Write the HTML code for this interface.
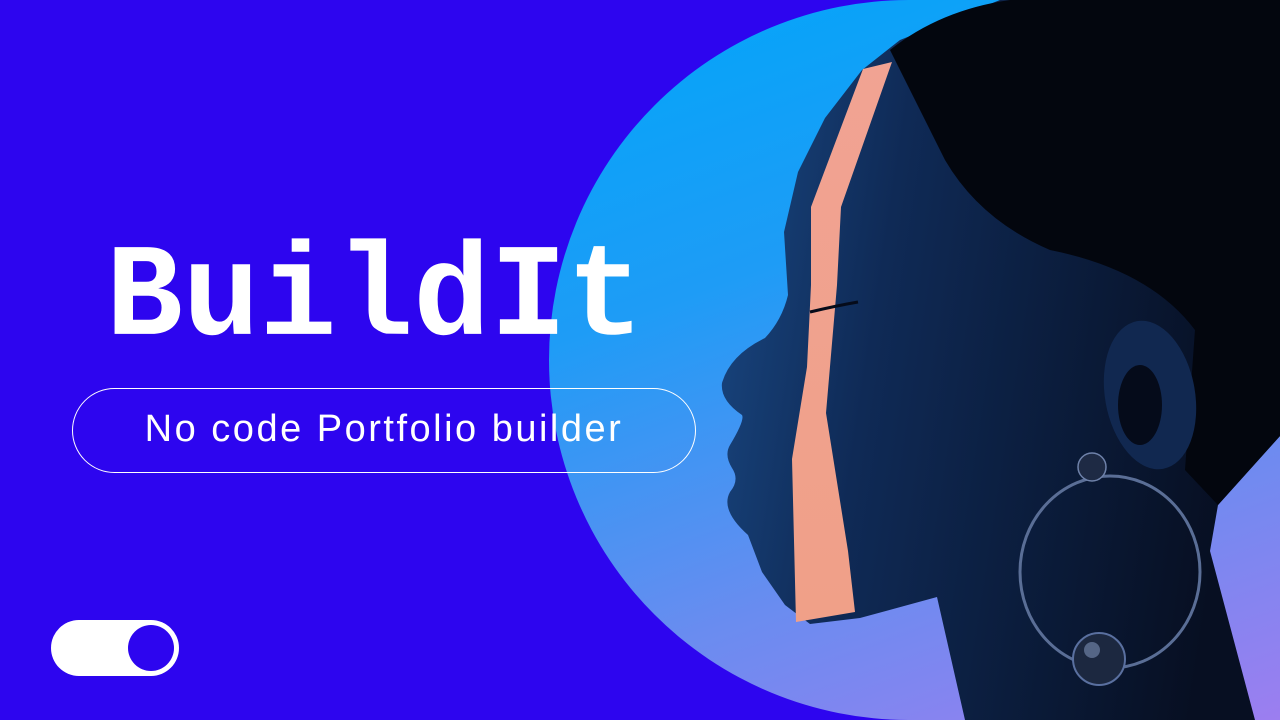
<!DOCTYPE html>
<html><head><meta charset="utf-8"><style>
html,body{margin:0;padding:0}
body{width:1280px;height:720px;overflow:hidden;background:#2d05ef;position:relative;font-family:"Liberation Sans",sans-serif}
.photo{position:absolute;left:549px;top:0;width:731px;height:720px;border-radius:362px 0 0 362px/362px 0 0 362px;overflow:hidden;
background:radial-gradient(ellipse 420px 380px at 1280px 720px,#c070e6 0%,rgba(176,112,232,.0) 100%),linear-gradient(160deg,#00a6fa 0%,#1e9cf6 35%,#6a8cf0 70%,#9c7ef0 100%)}
.title{position:absolute;left:106px;top:234px;font-family:"Liberation Mono",monospace;font-weight:bold;font-size:128px;color:#fff;transform:scaleY(1.03);transform-origin:0 0;letter-spacing:0px;line-height:1}
.pill{position:absolute;left:72px;top:388px;width:624px;height:85px;border:1px solid #fff;border-radius:43px;box-sizing:border-box;color:#fff;font-size:38px;text-align:center;line-height:81px;letter-spacing:2.5px}
.tog{position:absolute;left:51px;top:620px;width:128px;height:56px;background:#fff;border-radius:28px}
.tog::after{content:"";position:absolute;left:77px;top:5px;width:46px;height:46px;border-radius:50%;background:#2d05ef}
</style></head><body>
<div class="photo">
<svg width="731" height="720" viewBox="549 0 731 720" style="position:absolute;left:0;top:0">
<defs>
<linearGradient id="sk" x1="0" y1="0" x2="1" y2="0.2"><stop offset="0" stop-color="#1a4a86"/><stop offset=".35" stop-color="#0f2a56"/><stop offset="1" stop-color="#070f22"/></linearGradient>
<linearGradient id="st" x1="0" y1="0" x2="0" y2="1"><stop offset="0" stop-color="#f1a393"/><stop offset="1" stop-color="#f0a088"/></linearGradient>
</defs>
<path d="M1000 0 L1280 0 L1280 436 L1218 505 L1210 551 L1255 720 L965 720 L937 597 L860 618 L810 624 L785 605 L762 572 L748 535 Q720 510 730 492 Q740 480 732 468 Q724 455 730 445 Q745 420 742 415 Q720 400 722 383 Q730 355 765 338 Q782 320 788 295 L784 232 L798 172 L825 118 L862 70 L900 40 Z" fill="url(#sk)"/>
<path d="M890 50 Q940 10 1010 0 L1280 0 L1280 436 L1218 505 L1185 470 L1195 330 Q1150 270 1050 250 Q980 220 945 160 Z" fill="#03060e"/>
<path d="M892 62 L863 69 L811 207 L811 285 L807 367 L792 459 L796 622 L855 612 L848 551 L826 413 L837 285 L841 207 Z" fill="url(#st)"/>
<ellipse cx="1150" cy="395" rx="45" ry="75" fill="#112850" transform="rotate(-10 1150 395)"/>
<ellipse cx="1140" cy="405" rx="22" ry="40" fill="#050b1a"/>
<path d="M810 312 Q835 306 858 302" stroke="#050b1a" stroke-width="3" fill="none"/>
<ellipse cx="1110" cy="572" rx="90" ry="96" fill="none" stroke="#5a6e96" stroke-width="3"/>
<circle cx="1092" cy="467" r="14" fill="#1e2a44" stroke="#6f82aa" stroke-width="1.5"/>
<circle cx="1099" cy="659" r="26" fill="#1c2840" stroke="#5a70a0" stroke-width="2"/>
<circle cx="1092" cy="650" r="8" fill="#8ea4cc" opacity=".5"/>
</svg>
</div>
<div class="title">BuildIt</div>
<div class="pill">No code Portfolio builder</div>
<div class="tog"></div>
</body></html>
